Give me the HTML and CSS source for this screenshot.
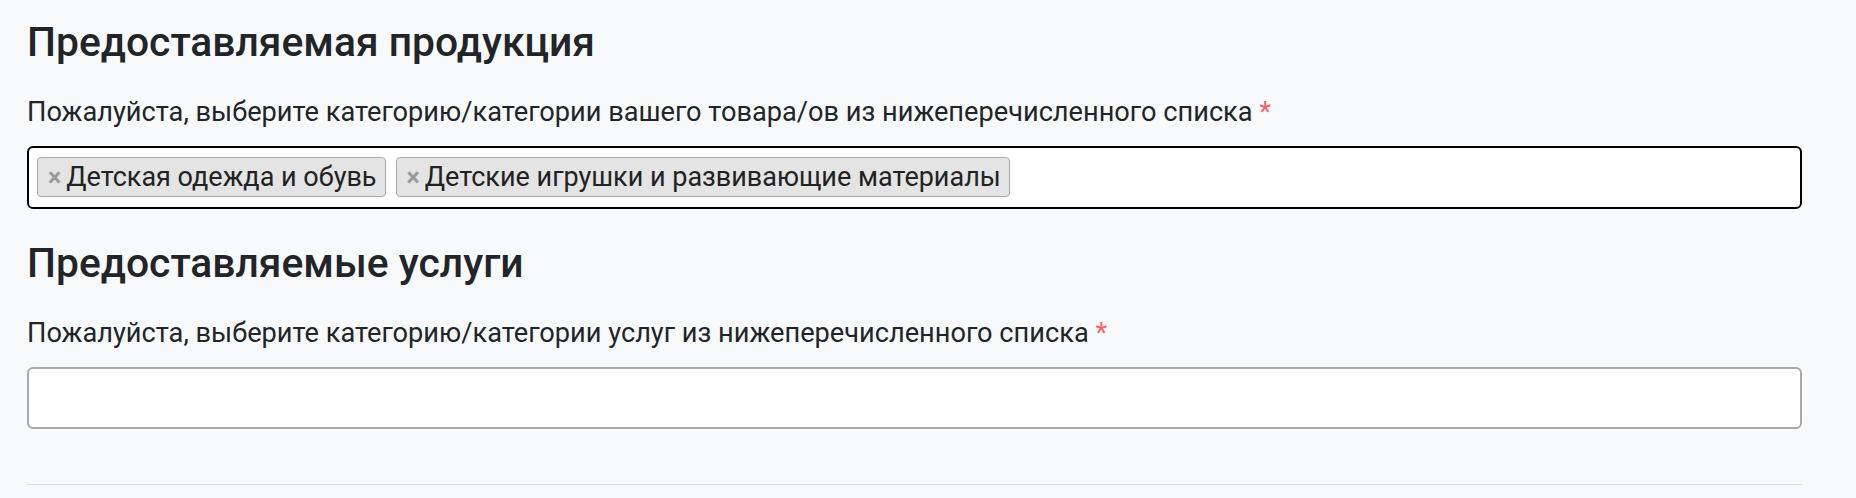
FILE: index.html
```html
<!DOCTYPE html>
<html lang="ru">
<head>
<meta charset="utf-8">
<title>Предоставляемая продукция</title>
<link rel="stylesheet" href="styles.css">
</head>
<body>
<main class="form">
  <section class="group">
    <h3 class="group-title">Предоставляемая продукция</h3>
    <label class="field-label">Пожалуйста, выберите категорию/категории вашего товара/ов из нижеперечисленного списка <span class="req">*</span></label>
    <div class="select select-focus">
      <ul class="chips">
        <li class="chip"><span class="chip-x">×</span>Детская одежда и обувь</li>
        <li class="chip"><span class="chip-x">×</span>Детские игрушки и развивающие материалы</li>
      </ul>
    </div>
  </section>
  <section class="group">
    <h3 class="group-title">Предоставляемые услуги</h3>
    <label class="field-label">Пожалуйста, выберите категорию/категории услуг из нижеперечисленного списка <span class="req">*</span></label>
    <div class="select"></div>
  </section>
  <hr class="divider">
</main>
</body>
</html>
```
FILE: styles.css
```css
html, body {
  margin: 0;
  padding: 0;
  background: #f8f9fa;
}
body {
  font-family: Roboto, "Noto Sans", sans-serif;
  color: #212529;
}
.form {
  width: 1775px;
  padding: 18px 0 0 27px;
}
.group {
  display: flex;
  flex-direction: column;
}
.group + .group {
  margin-top: 30px;
}
.group-title {
  margin: 0;
  font-size: 40.8px;
  font-weight: 500;
  line-height: 48.6px;
  color: #212529;
}
.field-label {
  margin-top: 25px;
  font-size: 27.2px;
  line-height: 40.5px;
  color: #212529;
}
.req {
  color: #f4646a;
}
.select {
  margin-top: 14px;
  box-sizing: border-box;
  height: 62px;
  border: 2px solid #a8a8a8;
  border-radius: 6px;
  background: #fff;
}
.select-focus {
  height: 63px;
  border-color: #000;
}
.chips {
  list-style: none;
  margin: 0;
  padding: 9px 8px 0;
  display: flex;
  gap: 10px;
}
.chip {
  box-sizing: border-box;
  height: 40px;
  display: flex;
  align-items: center;
  padding: 0 8px 0 10px;
  background: #e4e4e4;
  border: 1px solid #aaa;
  border-radius: 4px;
  font-size: 27px;
  color: #222;
}
.chip-x {
  color: #999;
  font-weight: 700;
  font-size: 25px;
  margin-right: 5px;
}
.divider {
  margin: 55px 0 0;
  border: 0;
  border-top: 1px solid #dcdee1;
}
```
